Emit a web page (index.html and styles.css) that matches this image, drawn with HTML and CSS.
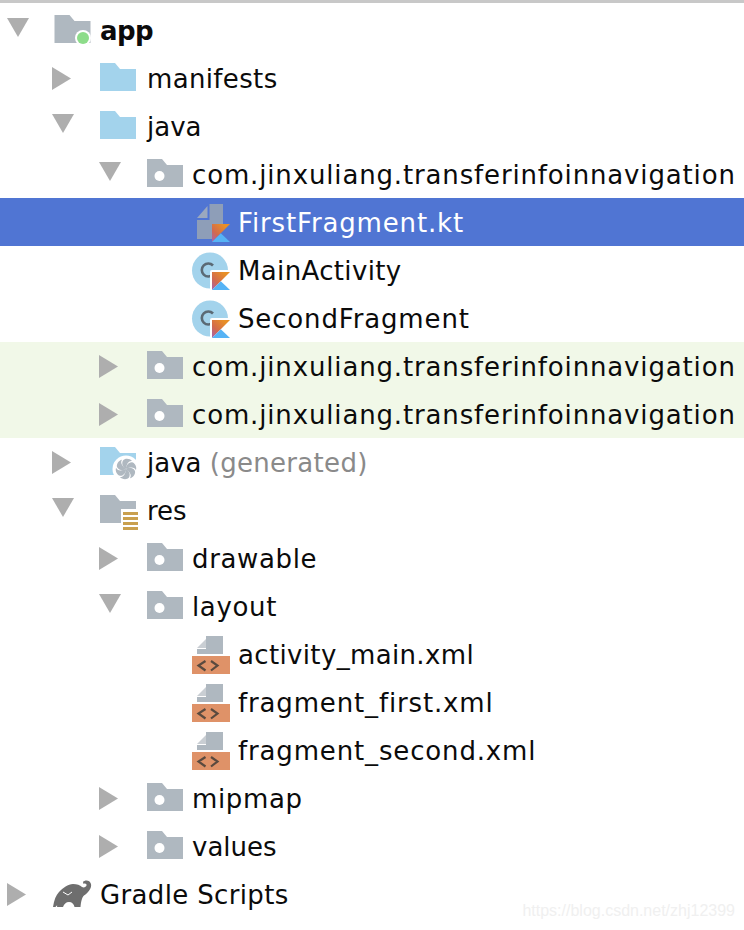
FILE: index.html
```html
<!DOCTYPE html>
<html lang="en">
<head>
<meta charset="utf-8">
<title>Project tree</title>
<link rel="stylesheet" href="styles.css">
</head>
<body>
<svg class="defs" width="0" height="0" aria-hidden="true">
  <defs>
    <linearGradient id="kg" x1="1" y1="0" x2="0" y2="1">
      <stop offset="0.2" stop-color="#e88f26"/>
      <stop offset="0.65" stop-color="#d2694e"/>
      <stop offset="1" stop-color="#a463b4"/>
    </linearGradient>
    <path id="arrow-down" d="M0 0H22L11 19Z" fill="#aeaeae"/>
    <path id="arrow-right" d="M0 0L19 11.500L0 23Z" fill="#aeaeae"/>
    <path id="folder" d="M0 0H15L20 6H36V28H0Z"/>
    <g id="package"><use href="#folder" x="1" y="3" fill="#afb8c0"/><circle cx="13.500" cy="20" r="5" fill="#fff"/></g>
    <g id="kotlin">
      <path d="M20 20H38L20 38Z" fill="url(#kg)"/>
      <path d="M28.800 29.200L38 38H20Z" fill="#56b3f5"/>
    </g>
    <g id="kt-class">
      <circle cx="18" cy="18.500" r="18" fill="#a3d3ec"/>
      <path d="M21 13.500A6.500 6.500 0 1 0 21 22.500" fill="none" stroke="#5b6a75" stroke-width="2.600"/>
      <rect x="18" y="18" width="21" height="21" rx="2" fill="#fff"/>
      <use href="#kotlin"/>
    </g>
    <g id="xml-file">
      <path d="M5 12L14 3V12Z" fill="#c9ced3"/>
      <path d="M14 0H31V18H5V13H14Z" fill="#afb8c0"/>
      <rect y="20" width="38" height="18" fill="#df9268"/>
      <path d="M13.500 25L6.500 29.500L13.500 34.500M19 25L25.500 29.500L19 34.500" fill="none" stroke="#5a4a3f" stroke-width="2.200"/>
    </g>
    <path id="blade" d="M27 25C24.500 24 22 20 24 16.500C26 14 31 14.500 33 17C30 16.500 27.500 19.500 27 25Z" fill="#afb8c0"/>
  </defs>
</svg>
<main class="tree">
  <div class="topline"></div>
  <div class="row l0">
    <svg class="tri down"><use href="#arrow-down"/></svg>
    <svg class="ico" viewBox="0 0 40 38"><use href="#folder" x="0.500" y="3" fill="#afb8c0"/><circle cx="29" cy="26" r="8" fill="#fff"/><circle cx="29" cy="26" r="6" fill="#8ddc8a"/></svg>
    <span class="label bold">app</span>
  </div>
  <div class="row l1">
    <svg class="tri right"><use href="#arrow-right"/></svg>
    <svg class="ico" viewBox="0 0 40 38"><use href="#folder" x="1" y="3" fill="#a3d3ec"/></svg>
    <span class="label sp-s">manifests</span>
  </div>
  <div class="row l1">
    <svg class="tri down"><use href="#arrow-down"/></svg>
    <svg class="ico" viewBox="0 0 40 38"><use href="#folder" x="1" y="3" fill="#a3d3ec"/></svg>
    <span class="label">java</span>
  </div>
  <div class="row l2">
    <svg class="tri down"><use href="#arrow-down"/></svg>
    <svg class="ico" viewBox="0 0 40 38"><use href="#package"/></svg>
    <span class="label sp-l">com.jinxuliang.transferinfoinnavigation</span>
  </div>
  <div class="row l3 selected">
    <span class="tri"></span>
    <svg class="ico" viewBox="0 0 40 38">
      <path d="M5 14L15.500 2V14Z" fill="#9aa8bf"/>
      <path d="M17.500 0H31V20H20V35H5V16H17.500Z" fill="#8e9eb8"/>
      <use href="#kotlin"/>
    </svg>
    <span class="label sp-l">FirstFragment.kt</span>
  </div>
  <div class="row l3">
    <span class="tri"></span>
    <svg class="ico" viewBox="0 0 40 38"><use href="#kt-class"/></svg>
    <span class="label sp-s">MainActivity</span>
  </div>
  <div class="row l3">
    <span class="tri"></span>
    <svg class="ico" viewBox="0 0 40 38"><use href="#kt-class"/></svg>
    <span class="label sp-l">SecondFragment</span>
  </div>
  <div class="row l2 tinted">
    <svg class="tri right"><use href="#arrow-right"/></svg>
    <svg class="ico" viewBox="0 0 40 38"><use href="#package"/></svg>
    <span class="label sp-l">com.jinxuliang.transferinfoinnavigation</span>
  </div>
  <div class="row l2 tinted">
    <svg class="tri right"><use href="#arrow-right"/></svg>
    <svg class="ico" viewBox="0 0 40 38"><use href="#package"/></svg>
    <span class="label sp-l">com.jinxuliang.transferinfoinnavigation</span>
  </div>
  <div class="row l1">
    <svg class="tri right"><use href="#arrow-right"/></svg>
    <svg class="ico" viewBox="0 0 40 38">
      <use href="#folder" x="1" y="3" fill="#a3d3ec"/>
      <circle cx="27" cy="25" r="13.500" fill="#fff"/>
      <use href="#blade"/>
      <use href="#blade" transform="rotate(60 27 25)"/>
      <use href="#blade" transform="rotate(120 27 25)"/>
      <use href="#blade" transform="rotate(180 27 25)"/>
      <use href="#blade" transform="rotate(240 27 25)"/>
      <use href="#blade" transform="rotate(300 27 25)"/>
    </svg>
    <span class="label">java <span class="muted">(generated)</span></span>
  </div>
  <div class="row l1">
    <svg class="tri down"><use href="#arrow-down"/></svg>
    <svg class="ico" viewBox="0 0 40 38">
      <use href="#folder" x="1" y="3" fill="#afb8c0"/>
      <rect x="22" y="17" width="18" height="22" fill="#fff"/>
      <g fill="#c9a04f"><rect x="24" y="20" width="15" height="3"/><rect x="24" y="25" width="15" height="3"/><rect x="24" y="30" width="15" height="3"/><rect x="24" y="35" width="15" height="3"/></g>
    </svg>
    <span class="label">res</span>
  </div>
  <div class="row l2">
    <svg class="tri right"><use href="#arrow-right"/></svg>
    <svg class="ico" viewBox="0 0 40 38"><use href="#package"/></svg>
    <span class="label sp-m">drawable</span>
  </div>
  <div class="row l2">
    <svg class="tri down"><use href="#arrow-down"/></svg>
    <svg class="ico" viewBox="0 0 40 38"><use href="#package"/></svg>
    <span class="label sp-m">layout</span>
  </div>
  <div class="row l3">
    <span class="tri"></span>
    <svg class="ico" viewBox="0 0 40 38"><use href="#xml-file"/></svg>
    <span class="label sp-s">activity_main.xml</span>
  </div>
  <div class="row l3">
    <span class="tri"></span>
    <svg class="ico" viewBox="0 0 40 38"><use href="#xml-file"/></svg>
    <span class="label sp-l">fragment_first.xml</span>
  </div>
  <div class="row l3">
    <span class="tri"></span>
    <svg class="ico" viewBox="0 0 40 38"><use href="#xml-file"/></svg>
    <span class="label sp-l">fragment_second.xml</span>
  </div>
  <div class="row l2">
    <svg class="tri right"><use href="#arrow-right"/></svg>
    <svg class="ico" viewBox="0 0 40 38"><use href="#package"/></svg>
    <span class="label sp-m">mipmap</span>
  </div>
  <div class="row l2">
    <svg class="tri right"><use href="#arrow-right"/></svg>
    <svg class="ico" viewBox="0 0 40 38"><use href="#package"/></svg>
    <span class="label">values</span>
  </div>
  <div class="row l0">
    <svg class="tri right"><use href="#arrow-right"/></svg>
    <svg class="ico" viewBox="0 0 40 38">
      <path d="M-1 31C0 24 2 19 5 16C9 12 14 8 19 8C23 8 26 9 28 11C30 12 32 11 32.500 9.500C33 8 31 7 29.500 8L29 6C31 3.500 36 4 37 8C38 12 34 17 30 19.500C28 21 27 26 26.500 31H20.500C20 28 18 26 15 26C12 26 10 28 9 31H3C3.500 29 3 29 1.500 31Z" fill="#6e6e6e"/>
      <path d="M9 16L14 19L18 16" fill="none" stroke="#fff" stroke-width="1"/>
    </svg>
    <span class="label sp-s">Gradle Scripts</span>
  </div>
  <div class="watermark">https://blog.csdn.net/zhj12399</div>
</main>
</body>
</html>
```
FILE: styles.css
```css
html, body {
  margin: 0;
  padding: 0;
  background: #fff;
}
body {
  width: 744px;
  height: 930px;
  overflow: hidden;
  font-family: "DejaVu Sans", sans-serif;
  font-size: 26px;
  color: #0b0b0b;
}
.defs {
  position: absolute;
}
.tree {
  position: relative;
  height: 930px;
}
.topline {
  height: 3px;
  margin-bottom: 3px;
  background: #c8c8c8;
}
.row {
  display: flex;
  align-items: center;
  height: 48px;
  white-space: nowrap;
}
.l0 { padding-left: 7px; }
.l1 { padding-left: 52px; }
.l2 { padding-left: 99px; }
.l3 { padding-left: 145px; }
.l1 .ico { margin-right: 8px; }
.tri {
  flex: none;
  width: 47px;
  height: 24px;
}
.tri.down {
  width: 22px;
  height: 19px;
  margin: -5px 25px 0 0;
}
.tri.right {
  width: 19px;
  height: 23px;
  margin-right: 28px;
}
.ico {
  flex: none;
  width: 40px;
  height: 38px;
  margin: 2px 6px 0 0;
  overflow: visible;
}
.label {
  margin-top: 2px;
  line-height: 48px;
}
.sp-s { letter-spacing: 0.35px; }
.sp-m { letter-spacing: 0.65px; }
.sp-l { letter-spacing: 0.85px; }
.bold {
  font-weight: 700;
  letter-spacing: -0.6px;
}
.muted {
  color: #8a8a8a;
  letter-spacing: 0.3px;
}
.selected {
  background: #5075d3;
}
.selected .label {
  color: #fff;
}
.tinted {
  background: #f1f8e8;
}
.watermark {
  position: absolute;
  right: 9px;
  top: 902px;
  font-family: "Liberation Sans", sans-serif;
  font-size: 16px;
  color: #f0f0f0;
}
```
